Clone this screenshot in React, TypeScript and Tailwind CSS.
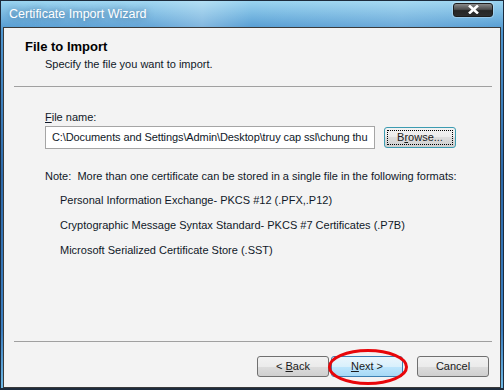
import React from 'react';

const font = { fontFamily: '"Liberation Sans", Arial, sans-serif' };

function VistaButton({
  children,
  primary,
  focused,
  className = '',
}: {
  children: React.ReactNode;
  primary?: boolean;
  focused?: boolean;
  className?: string;
}) {
  const face = primary
    ? 'border-[#3c7fb1] bg-[linear-gradient(#eaf6fd_0%,#d9f0fc_50%,#bee6fd_50%,#a7d9f5_100%)]'
    : focused
      ? 'border-[#3c9bb1] bg-[linear-gradient(#f2f2f2_0%,#ebebeb_50%,#dddddd_50%,#cfcfcf_100%)]'
      : 'border-[#707070] bg-[linear-gradient(#f2f2f2_0%,#ebebeb_50%,#dddddd_50%,#cfcfcf_100%)]';
  return (
    <div
      className={`relative flex h-[21px] w-[72px] items-center justify-center rounded-[3px] border text-[11px] text-[#1a1a1a] ${face} ${className}`}
    >
      {focused && (
        <div className="pointer-events-none absolute inset-[2px] border border-dotted border-black" />
      )}
      <span className="relative">{children}</span>
    </div>
  );
}

export default function App() {
  return (
    <div
      className="relative flex h-[390px] w-[504px] flex-col overflow-hidden bg-[#1d2b3c] p-[1px] pb-[2px]"
      style={font}
    >
      {/* Title bar + frame */}
      <div className="flex flex-1 flex-col bg-[linear-gradient(180deg,#9ad4f0_0%,#4d95cf_8%,#2b69aa_45%,#3a7ec0_85%,#6fb8e4_100%)] px-[2px]">
        <div className="relative flex h-[26px] items-center justify-between pl-[6px] pr-[8px]">
          <div className="pointer-events-none absolute inset-0 bg-[linear-gradient(90deg,transparent_0%,rgba(255,255,255,0.08)_30%,rgba(255,255,255,0.25)_40%,transparent_50%,rgba(255,255,255,0.12)_80%,transparent_100%)]" />
          <span className="relative mt-[1px] text-[12.5px] text-white [text-shadow:0_0_6px_rgba(20,50,90,0.6)]">
            Certificate Import Wizard
          </span>
          <div className="relative -mt-[9px] flex h-[14px] w-[40px] items-center justify-center rounded-[3px] border border-[#1c1c1c] bg-[linear-gradient(#8a8a8a_0%,#4d4d4d_45%,#262626_55%,#2e2e2e_100%)] shadow-[0_0_0_1px_rgba(255,255,255,0.25)]">
            <svg width="11" height="9" viewBox="0 0 11 9">
              <path d="M1 0.5 L10 8.5 M10 0.5 L1 8.5" stroke="white" strokeWidth="2.6" />
            </svg>
          </div>
        </div>

        {/* Client area */}
        <div className="flex flex-1 flex-col border border-[#3a3a3a] bg-[#f3f3f3] text-[11px] text-[#101828]">
          <div className="pl-[21px] pt-[11px]">
            <div className="text-[13px] font-bold leading-[16px] text-black">File to Import</div>
            <div className="mt-[2px] pl-[20px] leading-[14px]">Specify the file you want to import.</div>
          </div>
          <div className="ml-[10px] mr-[8px] mt-[15px] h-px bg-[#a0a0a0]" />

          <div className="pl-[41px] pt-[24px]">
            <div className="leading-[13px]">
              <span className="underline">F</span>ile name:
            </div>
            <div className="mt-[2px] flex items-center gap-[9px]">
              <div className="flex h-[23px] w-[330px] items-center overflow-hidden whitespace-nowrap border border-[#a5a5a5] bg-white pl-[6px] tracking-[-0.1px]">
                C:\Documents and Settings\Admin\Desktop\truy cap ssl\chung thu
              </div>
              <VistaButton focused>
                B<span className="underline">r</span>owse...
              </VistaButton>
            </div>

            <div className="mt-[20px] leading-[14px]">
              Note:&nbsp; More than one certificate can be stored in a single file in the following formats:
            </div>
            <div className="flex flex-col gap-[11px] pl-[15px] pt-[10px] leading-[14px]">
              <div>Personal Information Exchange- PKCS #12 (.PFX,.P12)</div>
              <div>Cryptographic Message Syntax Standard- PKCS #7 Certificates (.P7B)</div>
              <div>Microsoft Serialized Certificate Store (.SST)</div>
            </div>
          </div>

          <div className="flex-1" />
          <div className="ml-[10px] mr-[8px] h-px bg-[#a0a0a0]" />
          <div className="flex justify-end gap-[2px] pb-[10px] pr-[11px] pt-[14px]">
            <VistaButton>
              &lt; <span className="underline">B</span>ack
            </VistaButton>
            <VistaButton primary>
              <span className="underline">N</span>ext &gt;
            </VistaButton>
            <VistaButton className="ml-[12px]">Cancel</VistaButton>
          </div>
        </div>
      </div>

      {/* Red annotation ellipse */}
      <svg className="pointer-events-none absolute left-[327px] top-[348px]" width="82" height="38" viewBox="0 0 82 38">
        <ellipse cx="41" cy="19" rx="38.5" ry="16.5" fill="none" stroke="#e8060a" strokeWidth="3" />
      </svg>
    </div>
  );
}
